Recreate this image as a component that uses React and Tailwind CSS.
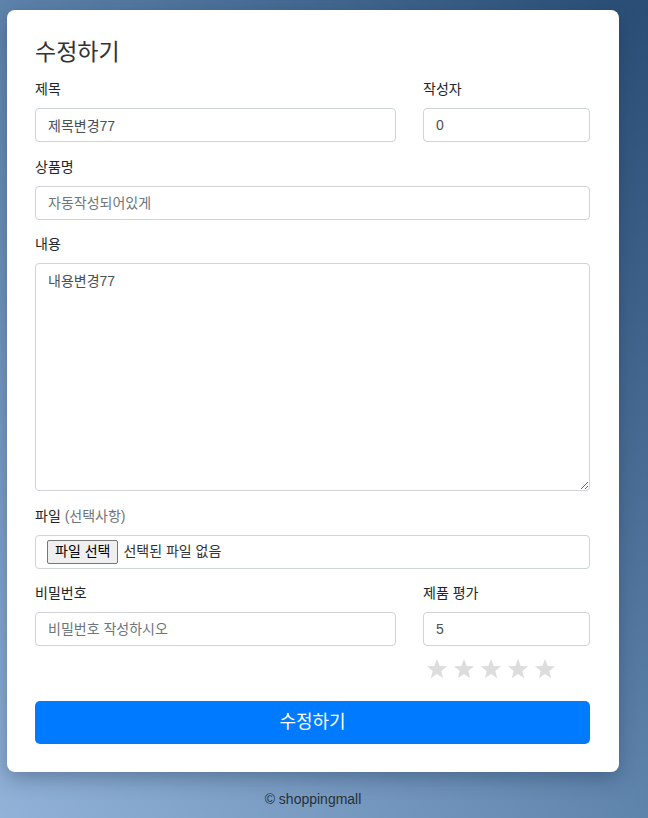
import { useState } from "react";

const FONT = { fontFamily: '"Liberation Sans", "Noto Sans CJK KR", sans-serif' };

function Star({ on }) {
  return (
    <svg width="22" height="22" viewBox="0 0 24 24">
      <polygon
        points="12,1 14.9,8.6 23,9 16.7,14.1 18.8,22 12,17.5 5.2,22 7.3,14.1 1,9 9.1,8.6"
        fill={on ? "#ffc107" : "#dddddd"}
      />
    </svg>
  );
}

function Field({ label, children, className = "" }) {
  return (
    <div className={"mb-[14.5px] " + className}>
      <label className="block text-[14px] leading-[21px] mb-2 text-[#212529]">
        {label}
      </label>
      {children}
    </div>
  );
}

const inputCls =
  "block w-full h-[34px] px-3 rounded-[4px] border border-[#ced4da] bg-white text-[14px] text-[#495057] placeholder:text-[#6c757d] outline-none";

export default function App() {
  const [rating] = useState(0);

  return (
    <div
      className="min-h-screen bg-gradient-to-tr from-[#92b2d8] via-[#5f84ac] to-[#294d75] pt-[10px] pl-[7px]"
      style={FONT}
    >
      <div className="w-[612px] bg-white rounded-lg shadow-[0_6px_20px_rgba(20,40,70,0.35)] pl-[28px] pr-[29px] pt-[28px] pb-[28px]">
        <h2 className="text-[23px] leading-[29px] mb-[12px] text-[#333]">수정하기</h2>

        <div className="grid grid-cols-[361px_167px] gap-x-[27px]">
          <Field label="제목">
            <input className={inputCls} defaultValue="제목변경77" />
          </Field>
          <Field label="작성자">
            <input className={inputCls} defaultValue="0" />
          </Field>
        </div>

        <Field label="상품명">
          <input className={inputCls} placeholder="자동작성되어있게" />
        </Field>

        <Field label="내용">
          <textarea
            className="block w-full h-[228px] px-3 py-[7px] rounded-[4px] border border-[#ced4da] text-[14px] leading-[21px] text-[#495057] outline-none"
            defaultValue="내용변경77"
          />
        </Field>

        <Field
          label={
            <>
              파일 <span className="text-[#6c757d]">(선택사항)</span>
            </>
          }
        >
          <div className="flex items-center h-[34px] pl-[11px] rounded-[4px] border border-[#ced4da]">
            <span className="h-[24px] px-[7px] flex items-center border border-[#767676] rounded-[2px] bg-[#efefef] text-[14px] text-black">
              파일 선택
            </span>
            <span className="ml-[5px] text-[14px] text-[#333]">선택된 파일 없음</span>
          </div>
        </Field>

        <div className="grid grid-cols-[361px_167px] gap-x-[27px]">
          <Field label="비밀번호">
            <input className={inputCls} type="text" placeholder="비밀번호 작성하시오" />
          </Field>
          <div>
            <label className="block text-[14px] leading-[21px] mb-2 text-[#212529]">
              제품 평가
            </label>
            <input className={inputCls} defaultValue="5" />
            <div className="flex gap-[5px] mt-[12px] ml-[3px]">
              {[1, 2, 3, 4, 5].map((i) => (
                <Star key={i} on={i <= rating} />
              ))}
            </div>
          </div>
        </div>

        <button className="mt-[21px] w-full h-[43px] rounded-[5px] bg-[#007bff] text-white text-[18px]">
          수정하기
        </button>
      </div>

      <footer className="w-[612px] text-center text-[14px] text-[#2a2f36] pt-[17px]">
        © shoppingmall
      </footer>
    </div>
  );
}
